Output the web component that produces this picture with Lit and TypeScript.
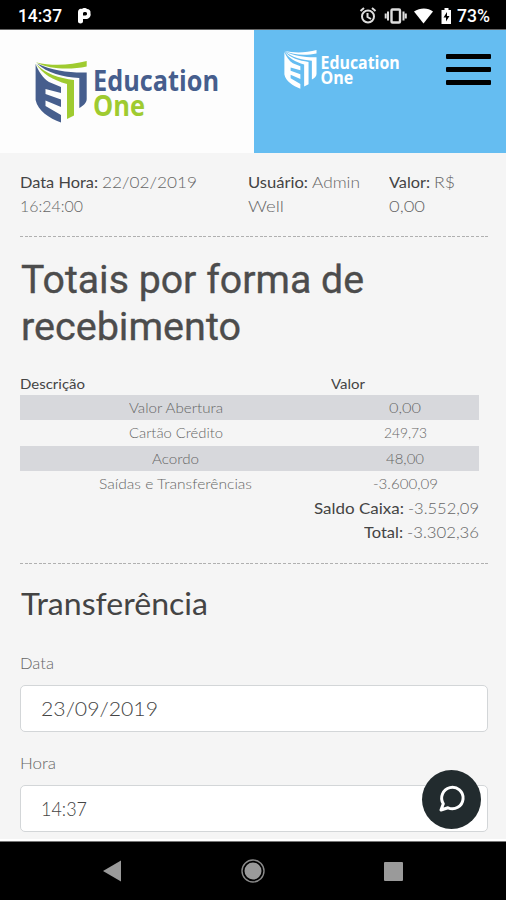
import { LitElement, html, css, svg } from "lit";
import { customElement, property } from "lit/decorators.js";

/** Text run whose glyphs are stretched so that it spans the given width. */
@customElement("fit-text")
class FitText extends LitElement {
  @property({ type: Number }) width = 0;
  @property() text = "";
  static styles = css`
    :host { display: inline-block; white-space: pre; }
    .run { display: inline-block; transform-origin: 0 50%; }
  `;
  render() {
    return html`<span class="run">${this.text}</span>`;
  }
  updated() {
    const run = this.renderRoot.querySelector(".run") as HTMLElement;
    run.style.transform = "none";
    const natural = run.getBoundingClientRect().width;
    run.style.transform = `scaleX(${(this.width / natural).toFixed(4)})`;
    run.style.marginRight = (this.width - natural).toFixed(2) + "px";
  }
}

const fit = (text: string, width: number) =>
  html`<fit-text text=${text} width=${width}></fit-text>`;

@customElement("brand-logo")
class BrandLogo extends LitElement {
  @property({ type: Boolean, reflect: true }) mono = false;
  static styles = css`
    :host { display: block; }
    svg { display: block; width: 100%; height: auto; overflow: visible; }
    .navy { fill: #465e8d; }
    .lime { fill: #9fcb30; }
    .word { font: 700 28.500px "Open Sans", "Noto Sans", sans-serif; }
    :host([mono]) .navy, :host([mono]) .lime { fill: #fff; }
  `;
  render() {
    return html`<svg viewBox="0 0 186 64" role="img" aria-label="Education One">
      ${svg`
      <path class="navy" d="M.6 3C4 11 8 17 14 21L26 26V32L10.500 28V33L26 38.500V46L10.500 39.500V45L26 54V61.500C14 57 3 50 .6 39Z"/>
      <path class="lime" d="M.6 1.200C18 5.500 36 4 51.700 0V5.500C35 9 15 8.500 .6 1.200Z"/>
      <path class="lime" d="M1 2.500C10 13 24 17 39 19V54.500L32 58V23C18 19 7 13 1 2.500Z"/>
      <path class="navy" d="M2 2.500C17 10 36 12 51.700 11.500V38C51.700 42 48 45 44.300 47V17C28 16 12 12 2 2.500Z"/>
      <text class="word navy" x="58" y="29.700" textLength="126" lengthAdjust="spacingAndGlyphs">Education</text>
      <text class="word lime" x="58" y="54.500" textLength="52" lengthAdjust="spacingAndGlyphs">One</text>`}
    </svg>`;
  }
}

@customElement("app-root")
class AppRoot extends LitElement {
  static styles = css`
    :host {
      display: flex; flex-direction: column; position: relative;
      width: 506px; height: 900px; overflow: hidden;
      background: #f5f5f5; color: #666;
      font-family: Lato, sans-serif; font-weight: 300;
    }
    * { box-sizing: border-box; }
    svg { display: block; }
    .status {
      flex: none; height: 30px; background: #000; color: #fff;
      border-bottom: 1px solid #666; padding: 2px 16px 0 18px;
      display: flex; align-items: center;
      font: 500 17.500px/28px Roboto, sans-serif;
    }
    .status .p { margin: 1px 0 0 16px; }
    .status .right { margin-left: auto; display: flex; align-items: center; }
    .header { flex: none; height: 123px; display: flex; }
    .white { width: 254px; background: #fdfdfd; padding: 31px 0 0 35px; }
    .blue { flex: 1; background: #65bdf1; display: flex; justify-content: space-between; padding: 19px 15px 0 30px; }
    .white brand-logo { width: 186px; }
    .blue brand-logo { width: 117px; margin-top: 1px; }
    .menu { width: 45px; height: 31px; margin-top: 5px; display: flex; flex-direction: column; justify-content: space-between; }
    .menu i { height: 5px; background: #000; border-radius: 1px; }
    .info {
      flex: none; margin: 0 17px 0 20px; height: 83px; padding-top: 17px;
      display: grid; grid-template-columns: 228px 141px 1fr;
      font-size: 16px; line-height: 24px;
    }
    .dash { flex: none; height: 1px; margin: 0 17px 0 20px;
      background: repeating-linear-gradient(90deg, #b0b0b0 0 3px, transparent 3px 4.700px); }
    .info > div, .total { white-space: nowrap; }
    .label { color: #444; font-weight: 400; }
    .gap { display: inline-block; width: 4px; }
    h1 { margin: 19px 0 0 21px; font: 400 39.500px/47px Roboto, sans-serif; color: #4c4c4c; height: 94px;
      -webkit-text-stroke: .35px #4c4c4c; }
    h1 div, h2 div { white-space: nowrap; }
    .table { margin: 25px 27px 0 20px; font-size: 13.500px; }
    .row { display: grid; grid-template-columns: 311px 148px; height: 25.400px; line-height: 27px; text-align: center; }
    .row.odd { background: #d7d8dc; }
    .row.head { height: 20px; line-height: 18px; text-align: left; color: #444; font-weight: 400; }
    .total { text-align: right; height: 24px; line-height: 24px; font-size: 16px; }
    .totals { margin: -1px 0 19.400px; }
    h2 { margin: 19px 0 0 21px; height: 40px; font-weight: 400; font-size: 30px; line-height: 40px; color: #444; }
    .field { margin: 0 18px 0 20px; }
    .field .name { height: 24px; font-size: 16px; line-height: 24px; }
    .input { height: 47px; margin-top: 10px; border: 1.500px solid #d3d6d8; border-radius: 5px; background: #fff;
      padding-left: 20px; font-size: 20px; line-height: 45px; color: #444; }
    .first { margin-top: 28px; }
    .second { margin-top: 19px; }
    .nav {
      position: absolute; inset: auto 0 0 0; height: 61px; background: #000; border-top: 2px solid #fff;
      box-shadow: inset 0 1px #777;
    }
    .chat { position: absolute; left: 422px; top: 770px; width: 59px; height: 59px; border-radius: 50%; background: #222b2e; }
  `;

  private rows: [string, number, string, number][] = [
    ["Valor Abertura", 94, "0,00", 32],
    ["Cartão Crédito", 94, "249,73", 43],
    ["Acordo", 47, "48,00", 38],
    ["Saídas e Transferências", 153, "-3.600,09", 65],
  ];

  render() {
    return html`
      <div class="status">
        ${fit("14:37", 44)}
        <svg class="p" width="14" height="17" viewBox="0 0 14 17">
          <path fill="#fff" fill-rule="evenodd" d="M0 4C0 1.500 2 0 4 1 5-.3 8-.3 9 1 11.500 1 13 3 12.400 5 13.500 8 11 11 8 11H5V13.500C5 16 0 16 0 13.500ZM5 5V7.500H7.500C9.500 7.500 9.500 4 7.500 4 6 4 5 4.500 5 5Z"/>
        </svg>
        <div class="right">
          <svg width="95" height="20" viewBox="0 0 95 20">
            <g fill="none" stroke="#ddd" stroke-width="2">
              <circle cx="10" cy="10.500" r="6"/>
              <path d="M9.500 7V11L13 13M2.500 5 6 2M14 2 17.500 5"/>
            </g>
            <rect x="33.500" y="3.500" width="8.500" height="13" rx="1" fill="none" stroke="#ddd" stroke-width="2.400"/>
            <path stroke="#ddd" stroke-width="2" d="M30 5.500V14.500M27.700 7.500V12.500M45.500 5.500V14.500M47.800 7.500V12.500"/>
            <path fill="#fff" d="M56 5.500C62 1.500 70 1.500 75 5.500L65.500 17.500Z"/>
            <path fill="#fff" fill-rule="evenodd" d="M83.500 4H86.500V2H90.500V4H93V18H83.500ZM89 6 85.500 11.500H88V15.500L91.500 10H89Z"/>
          </svg>
          <span class="gap"></span>${fit("73%", 33)}
        </div>
      </div>
      <div class="header">
        <div class="white"><brand-logo></brand-logo></div>
        <div class="blue">
          <brand-logo mono></brand-logo>
          <div class="menu"><i></i><i></i><i></i></div>
        </div>
      </div>
      <div class="info">
        <div><span class="label">${fit("Data Hora:", 78)}</span><span class="gap"></span>${fit("22/02/2019", 95)}<br />${fit("16:24:00", 63)}</div>
        <div><span class="label">${fit("Usuário:", 60)}</span><span class="gap"></span>${fit("Admin", 48)}<br />${fit("Well", 36)}</div>
        <div><span class="label">${fit("Valor:", 41)}</span><span class="gap"></span>${fit("R$", 21)}<br />${fit("0,00", 36)}</div>
      </div>
      <div class="dash"></div>
      <h1><div>${fit("Totais por forma de", 343)}</div><div>${fit("recebimento", 220)}</div></h1>
      <div class="table">
        <div class="row head"><span>${fit("Descrição", 65)}</span><span>${fit("Valor", 34)}</span></div>
        ${this.rows.map(
          ([name, nw, value, vw], i) => html`<div class="row ${i % 2 ? "" : "odd"}">
            <span>${fit(name, nw)}</span><span>${fit(value, vw)}</span>
          </div>`
        )}
        <div class="totals">
          <div class="total"><span class="label">${fit("Saldo Caixa:", 90)}</span><span class="gap"></span>${fit("-3.552,09", 71)}</div>
          <div class="total"><span class="label">${fit("Total:", 39)}</span><span class="gap"></span>${fit("-3.302,36", 72)}</div>
        </div>
      </div>
      <div class="dash"></div>
      <h2><div>${fit("Transferência", 187)}</div></h2>
      <div class="field first">
        <div class="name">${fit("Data", 34)}</div>
        <div class="input">${fit("23/09/2019", 117)}</div>
      </div>
      <div class="field second">
        <div class="name">${fit("Hora", 36)}</div>
        <div class="input">${fit("14:37", 46)}</div>
      </div>
      <div class="chat">
        <svg width="59" height="59" viewBox="0 0 59 59" fill="none" stroke="#fff" stroke-width="3" stroke-linejoin="round" stroke-linecap="round">
          <path d="M21.300 33.700A10.700 10.700 0 1 1 26 37.800L19 40 21.300 33.700"/>
        </svg>
      </div>
      <div class="nav">
        <svg width="506" height="59" viewBox="0 841 506 59">
          <path fill="#9a9a9a" d="M103 871 121 860.500V881.500Z"/>
          <circle cx="253" cy="871" r="8.500" fill="#9a9a9a"/>
          <circle cx="253" cy="871" r="11" fill="none" stroke="#8a8a8a" stroke-width="1.400"/>
          <rect x="384" y="862" width="19" height="19" rx="1" fill="#9a9a9a"/>
        </svg>
      </div>`;
  }
}
